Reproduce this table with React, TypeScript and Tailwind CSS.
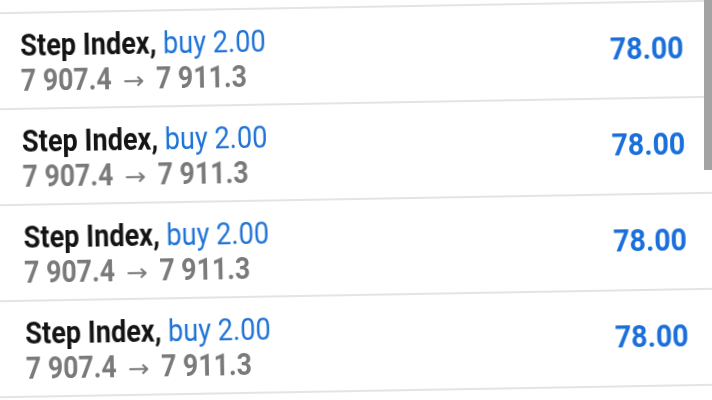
import React from "react";

const rows = [0, 1, 2, 3];

export default function App() {
  return (
    <div className="relative w-[712px] h-[400px] overflow-hidden bg-white" style={{ fontFamily: "Roboto, 'Noto Sans', sans-serif" }}>
      <div className="w-[780px] h-[400px] -ml-[34px] rotate-[-1deg] pt-[6px] blur-[0.3px]">
        {rows.map((i) => (
          <div key={i} className="h-[96px] border-t-2 border-[#e4e4e4] flex items-center justify-between pl-[57px] pr-[60px]">
            <div className="flex flex-col pt-[4px]">
              <div className="text-[31px] leading-[35px] whitespace-nowrap scale-x-[0.875] origin-left">
                <span className="font-bold text-[#141414]">Step Index,</span>{" "}
                <span className="text-[#1f73d6]">buy 2.00</span>
              </div>
              <div className="text-[31px] leading-[35px] font-bold text-[#7a7a7a] whitespace-nowrap scale-x-[0.86] origin-left">
                7 907.4{" "}
                <span
                  className="inline-block font-normal text-[24px] leading-none mx-[8px] scale-x-[1.25]"
                  style={{ fontFamily: "'DejaVu Sans', sans-serif" }}
                >
                  →
                </span>{" "}
                7 911.3
              </div>
            </div>
            <div className="text-[31px] font-bold text-[#1a6fdb] pb-[2px] scale-x-[0.92] origin-right">78.00</div>
          </div>
        ))}
        <div className="border-t-2 border-[#e4e4e4]" />
      </div>
      <div className="absolute right-0 top-0 w-[8px] h-[170px] bg-[#a3a3a3]" />
    </div>
  );
}
